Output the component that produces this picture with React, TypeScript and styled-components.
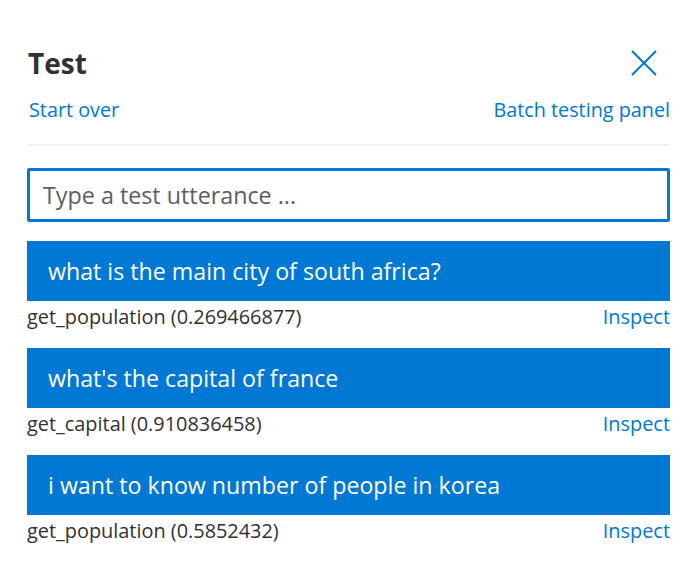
import React from "react";
import styled, { createGlobalStyle } from "styled-components";

const Global = createGlobalStyle`
  html, body { margin: 0; padding: 0; background: #ffffff; }
  body { font-family: "Open Sans", "Noto Sans", sans-serif; }
  * { box-sizing: border-box; }
`;

const Panel = styled.div`
  width: 689px;
  height: 584px;
  padding: 40px 19px 0 27px;
  display: flex;
  flex-direction: column;
  background: #fff;
`;

const Header = styled.div`
  display: flex;
  align-items: center;
  justify-content: space-between;
  height: 46px;
`;

const Title = styled.h1`
  margin: 0 0 0 1px;
  font-size: 28px;
  font-weight: 700;
  color: #323130;
  line-height: 46px;
`;

const CloseButton = styled.button`
  border: none;
  background: transparent;
  padding: 0;
  margin-right: 12px;
  width: 28px;
  height: 28px;
  display: flex;
  align-items: center;
  justify-content: center;
  cursor: pointer;
`;

const LinkRow = styled.div`
  display: flex;
  justify-content: space-between;
  align-items: center;
  margin-top: 5px;
  height: 36px;
`;

const LinkButton = styled.a`
  font-size: 19.8px;
  color: #0078d4;
  text-decoration: none;
  cursor: pointer;
  padding-left: 2px;
`;

const Divider = styled.hr`
  border: none;
  height: 2px;
  background: #f3f2f1;
  margin: 17px 0 22px;
`;

const Input = styled.input`
  width: 100%;
  height: 54px;
  border: 3px solid #0078d4;
  border-radius: 2px;
  padding: 0 13px;
  font-family: "Open Sans", "Noto Sans", sans-serif;
  font-size: 23.3px;
  color: #323130;
  outline: none;
  &::placeholder { color: #605e5c; }
`;

const List = styled.div`
  display: flex;
  flex-direction: column;
  gap: 7.5px;
  margin-top: 19px;
`;

const Item = styled.div`
  display: flex;
  flex-direction: column;
`;

const Utterance = styled.div`
  height: 59.5px;
  background: #0078d4;
  color: #fff;
  font-size: 23.2px;
  display: flex;
  align-items: center;
  padding: 0 21px;
`;

const ResultRow = styled.div`
  height: 40px;
  display: flex;
  align-items: flex-start;
  justify-content: space-between;
  padding-top: 2px;
  font-size: 19.9px;
  line-height: 28px;
  color: #323130;
`;

const Inspect = styled.a`
  color: #0078d4;
  cursor: pointer;
`;

const items = [
  { text: "what is the main city of south africa?", intent: "get_population (0.269466877)" },
  { text: "what's the capital of france", intent: "get_capital (0.910836458)" },
  { text: "i want to know number of people in korea", intent: "get_population (0.5852432)" },
];

export default function App() {
  return (
    <>
      <Global />
      <Panel>
        <Header>
          <Title>Test</Title>
          <CloseButton aria-label="Close">
            <svg width="26" height="26" viewBox="0 0 26 26">
              <path d="M1 1L25 25M25 1L1 25" stroke="#0078d4" strokeWidth="2" fill="none" />
            </svg>
          </CloseButton>
        </Header>
        <LinkRow>
          <LinkButton>Start over</LinkButton>
          <LinkButton>Batch testing panel</LinkButton>
        </LinkRow>
        <Divider />
        <Input placeholder="Type a test utterance ..." />
        <List>
          {items.map((it) => (
            <Item key={it.text}>
              <Utterance>{it.text}</Utterance>
              <ResultRow>
                <span>{it.intent}</span>
                <Inspect>Inspect</Inspect>
              </ResultRow>
            </Item>
          ))}
        </List>
      </Panel>
    </>
  );
}
